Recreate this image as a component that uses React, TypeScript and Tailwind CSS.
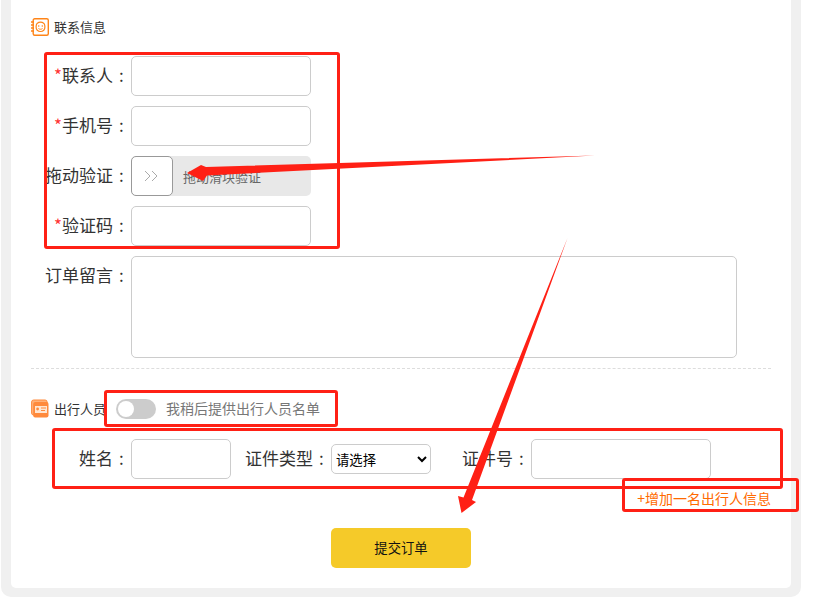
const font = "font-['Microsoft_YaHei','Noto_Sans_CJK_SC',sans-serif]";

function FieldLabel({ text, required }: { text: string; required?: boolean }) {
  return (
    <span className="whitespace-nowrap text-[17px] leading-[38px] text-[#333]">
      {required && <span className="text-[#f33]">*</span>}
      {text}
      <span className="ml-[6px] mr-[6px] inline-block w-[6px]">:</span>
    </span>
  );
}

function Row({ text, required, children }: { text: string; required?: boolean; children: React.ReactNode }) {
  return (
    <div className="flex h-10">
      <div className="flex w-[120px] justify-end">
        <FieldLabel text={text} required={required} />
      </div>
      {children}
    </div>
  );
}

function TextInput({ width }: { width: string }) {
  return <input className={`h-10 rounded-[5px] border border-[#ccc] bg-white ${width}`} />;
}

function SectionTitle({ icon, text }: { icon: React.ReactNode; text: string }) {
  return (
    <div className="flex h-5 items-center">
      {icon}
      <span className="ml-[5px] whitespace-nowrap text-[13px] text-[#333]">{text}</span>
    </div>
  );
}

function ContactIcon() {
  return (
    <svg width="18" height="18" viewBox="0 0 18 18" fill="none" stroke="#ff8417" strokeWidth="1.4">
      <rect x="2.2" y="0.7" width="15.1" height="16.6" rx="1.5" />
      <path d="M0 4h3M0 7h3M0 10h3M0 13h3" />
      <path d="M6 5.5c2-1.5 5-1.5 7 0c1.2 1.5 1.2 5 0 6.5c-2 2-5 2-7 0c-1.2-1.5-1.2-5 0-6.5Z" strokeWidth="1.2" />
      <circle cx="7.7" cy="8" r="0.8" fill="#ff8417" stroke="none" />
      <circle cx="11.3" cy="8" r="0.8" fill="#ff8417" stroke="none" />
      <path d="M7.5 10.5c1 1 3 1 4 0" strokeWidth="1" />
    </svg>
  );
}

function CardIcon() {
  return (
    <svg width="18" height="20" viewBox="0 0 18 20">
      <rect x="0.6" y="1" width="15.5" height="15" rx="2" fill="#ffb27a" stroke="#ff8a3c" />
      <rect x="2.2" y="3" width="15.3" height="15.5" rx="2" fill="#ff8a3c" />
      <rect x="4" y="7" width="12" height="7" fill="#ffe6d2" />
      <circle cx="6.6" cy="10" r="1.4" fill="#ff8a3c" />
      <path d="M10 9h5M10 11.5h4" stroke="#ff8a3c" />
    </svg>
  );
}

function RedBox({ className }: { className: string }) {
  return <div className={`pointer-events-none absolute rounded-[3px] border-[3px] border-[#ff2015] ${className}`} />;
}

export default function App() {
  return (
    <div className={`relative h-[607px] w-[813px] overflow-hidden bg-white ${font}`}>
      <div className="ml-px h-[597px] w-[800px] rounded-b-[10px] bg-[#f0f0f0] px-[10px] pb-[9px]">
        <div className="flex h-full flex-col rounded-b-[5px] bg-white pt-[17px]">
          <div className="pl-5">
            <SectionTitle icon={<ContactIcon />} text="联系信息" />
          </div>
          <div className="mt-[19px] flex flex-col gap-[10px]">
            <Row text="联系人" required>
              <TextInput width="w-[180px]" />
            </Row>
            <Row text="手机号" required>
              <TextInput width="w-[180px]" />
            </Row>
            <Row text="拖动验证">
              <div className="flex h-10 w-[180px] items-center rounded-[5px] bg-[#e8e8e8]">
                <div className="flex h-10 w-[42px] items-center justify-center rounded-[5px] border border-[#999] bg-white">
                  <svg width="16" height="12" viewBox="0 0 16 12" fill="none" stroke="#aaa" strokeWidth="1">
                    <path d="M1 1l5 5-5 5M8 1l5 5-5 5" />
                  </svg>
                </div>
                <span className="ml-[10px] mt-[2px] whitespace-nowrap text-[13px] text-[#666]">拖动滑块验证</span>
              </div>
            </Row>
            <Row text="验证码" required>
              <TextInput width="w-[180px]" />
            </Row>
            <div className="flex">
              <div className="flex h-10 w-[120px] justify-end">
                <FieldLabel text="订单留言" />
              </div>
              <textarea className="h-[102px] w-[606px] resize-none rounded-[5px] border border-[#ccc] bg-white" />
            </div>
          </div>
          <div className="mx-5 mt-[10px] border-t border-dashed border-[#ddd]" />
          <div className="mt-[29px] flex items-center pl-5">
            <SectionTitle icon={<CardIcon />} text="出行人员" />
            <div className="ml-[10px] h-5 w-10 rounded-full bg-[#ccc] p-[2px]">
              <div className="h-4 w-4 rounded-full bg-white" />
            </div>
            <span className="ml-[10px] whitespace-nowrap text-[14px] text-[#777]">我稍后提供出行人员名单</span>
          </div>
          <div className="mt-5 flex h-10">
            <Row text="姓名">
              <TextInput width="w-[100px]" />
            </Row>
            <div className="flex w-[100px] justify-end">
              <FieldLabel text="证件类型" />
            </div>
            <select className="mt-[5px] h-[30px] w-[100px] rounded-[5px] border border-[#ccc] bg-white text-[13.33px] text-black">
              <option>请选择</option>
            </select>
            <div className="flex w-[100px] justify-end">
              <FieldLabel text="证件号" />
            </div>
            <TextInput width="w-[180px]" />
          </div>
          <div className="mt-[10px] pr-5 text-right text-[14px] leading-[18px] text-[#ff6a00]">+增加一名出行人信息</div>
          <button className="mx-auto mt-[21px] h-10 w-[140px] rounded-[5px] bg-[#f5ca29] text-[13.33px] text-[#111]">提交订单</button>
        </div>
      </div>
      <RedBox className="left-[44px] top-[52px] h-[197px] w-[296px]" />
      <RedBox className="left-[104px] top-[390px] h-[37px] w-[234px]" />
      <RedBox className="left-[52px] top-[428px] h-[61px] w-[731px]" />
      <RedBox className="left-[622px] top-[478px] h-[34px] w-[177px]" />
      <svg className="pointer-events-none absolute left-0 top-0" width="813" height="607" viewBox="0 0 813 607">
        <path d="M595 155.5L206 167L201 165L187 173L203 181L207 175.5Z" fill="#ff2015" />
        <path d="M567.5 238L472 500L476 502L461.5 513L458 496L463.5 497.5Z" fill="#ff2015" />
      </svg>
    </div>
  );
}
